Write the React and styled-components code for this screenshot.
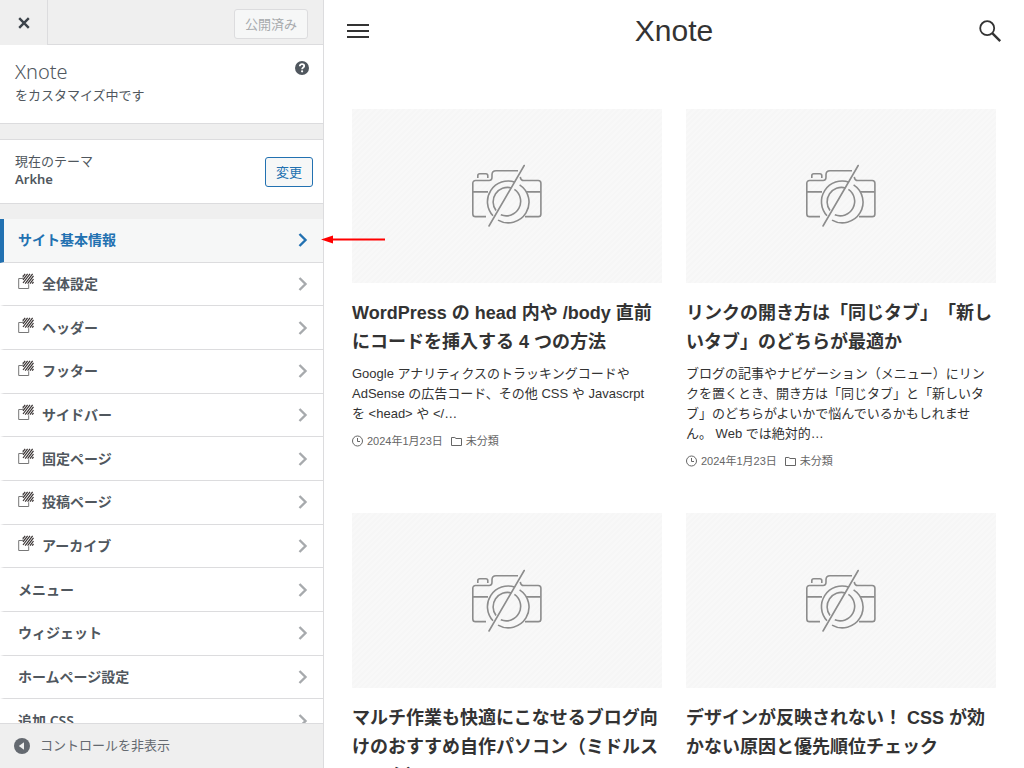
import React from "react";
import styled, { createGlobalStyle } from "styled-components";

const GlobalStyle = createGlobalStyle`
  * {
    box-sizing: border-box;
  }
  body {
    margin: 0;
    background: #fff;
    text-spacing-trim: space-all;
  }
  h1, h2, h3, p, ul {
    margin: 0;
    padding: 0;
    font-weight: normal;
  }
  button {
    font-family: inherit;
    cursor: pointer;
  }
  a {
    color: inherit;
    text-decoration: none;
  }
  svg {
    display: block;
    flex-shrink: 0;
  }
`;

const Layout = styled.div`
  display: flex;
  height: 100vh;
  overflow: hidden;
`;

const Sidebar = styled.aside`
  position: relative;
  display: flex;
  flex-direction: column;
  flex-shrink: 0;
  width: 324px;
  background: #efefef;
  border-right: 1px solid #dcdcde;
  color: #50575e;
  font-family: "Noto Sans", "Noto Sans CJK JP", sans-serif;
  font-size: 13px;
`;
const TopBar = styled.header`
  display: flex;
  flex-shrink: 0;
  height: 45px;
`;
const CloseButton = styled.button`
  display: flex;
  align-items: center;
  justify-content: center;
  width: 48px;
  padding: 0;
  color: #3c434a;
  background: #efefef;
  border: 0;
  border-right: 1px solid #dcdcde;
`;
const TopActions = styled.div`
  display: flex;
  flex: 1;
  align-items: center;
  justify-content: flex-end;
  padding: 4px 15px 0 0;
  border-bottom: 1px solid #dcdcde;
`;
const Button = styled.button`
  height: 30px;
  padding: 0 10px;
  font-size: 13px;
  line-height: 28px;
  color: ${(p) => (p.disabled ? "#a7aaad" : "#2271b1")};
  background: #f6f7f7;
  border: 1px solid ${(p) => (p.disabled ? "#dcdcde" : "#2271b1")};
  border-radius: 3px;
`;
const Panels = styled.div`
  flex: 1;
  min-height: 0;
  overflow: hidden;
`;
const SiteInfo = styled.section`
  display: flex;
  justify-content: space-between;
  height: 79px;
  padding: 13px 13px 0 15px;
  background: #fff;
  border-bottom: 1px solid #dcdcde;
`;
const SiteTitle = styled.h1`
  font-size: 20px;
  font-weight: 300;
  line-height: 27px;
`;
const HelpButton = styled.button`
  align-self: flex-start;
  padding: 1px 0;
  color: #50575e;
  background: none;
  border: 0;
`;
const ThemeInfo = styled.section`
  display: flex;
  align-items: center;
  justify-content: space-between;
  height: 65px;
  margin: 15px 0;
  padding: 0 10px 0 15px;
  background: #fff;
  border-top: 1px solid #dcdcde;
  border-bottom: 1px solid #dcdcde;
`;
const ThemeName = styled.div`
  padding-bottom: 4px;
  line-height: 18px;
`;
const Strong = styled.strong`
  display: block;
  font-weight: 600;
`;
const Menu = styled.ul`
  display: grid;
  grid-auto-rows: 1fr;
  min-height: 524px;
  list-style: none;
`;
const MenuLink = styled.a`
  display: flex;
  align-items: center;
  gap: 8px;
  height: 100%;
  padding: 0 15px 0 14px;
  font-size: 14px;
  font-weight: 600;
  color: ${(p) => (p.$active ? "#2271b1" : "#50575e")};
  background: ${(p) => (p.$active ? "#f6f7f7" : "#fff")};
  border-bottom: 1px solid #dcdcde;
  border-left: 4px solid ${(p) => (p.$active ? "#2271b1" : "#fff")};

  > svg {
    margin-bottom: 2px;
  }
`;
const Label = styled.span`
  flex: 1;
  padding-bottom: 2px;
`;
const Collapse = styled.button`
  display: flex;
  align-items: center;
  flex-shrink: 0;
  gap: 10px;
  height: 45px;
  padding: 0 14px;
  font-size: 13px;
  color: #646970;
  background: #efefef;
  border: 0;
  border-top: 1px solid #dcdcde;
`;
const CollapseLabel = styled.span`
  padding-bottom: 3px;
`;
const Arrow = styled.svg`
  position: absolute;
  top: 234px;
  left: 321px;
  z-index: 1;
`;

const Preview = styled.main`
  flex: 1;
  min-width: 0;
  overflow: hidden;
  color: #333;
  font-family: "Liberation Sans", "Noto Sans CJK JP", sans-serif;
`;
const PreviewHeader = styled.header`
  display: flex;
  align-items: center;
  justify-content: space-between;
  height: 61px;
  margin-bottom: 48px;
  padding: 0 22px;
`;
const IconButton = styled.button`
  padding: 0;
  color: #333;
  background: none;
  border: 0;
`;
const Brand = styled.h2`
  font-size: 30px;
`;
const Posts = styled.div`
  display: grid;
  grid-template-columns: 1fr 1fr;
  gap: 44px 24px;
  padding: 0 28px;
`;
const Thumb = styled.div`
  display: flex;
  align-items: center;
  justify-content: center;
  aspect-ratio: 16 / 9;
  background: repeating-linear-gradient(135deg, #f6f6f6 0 2px, #f8f8f8 2px 4px);
`;
const PostTitle = styled.h3`
  margin: 16px 0 7px;
  font-size: 18px;
  font-weight: bold;
  line-height: 29px;
`;
const Excerpt = styled.p`
  padding-right: 5px;
  font-size: 13px;
  line-height: 20px;
`;
const Meta = styled.div`
  display: flex;
  align-items: center;
  gap: 4px;
  margin-top: 9px;
  font-size: 11px;
  line-height: 16px;
  color: #666;
`;
const Posted = styled.time`
  margin-right: 4px;
`;

const CloseIcon = () => (
  <svg width="12" height="12" viewBox="0 0 12 12" stroke="currentColor" strokeWidth="2.4" aria-hidden="true">
    <path d="M1.2 1.2 10.8 10.8M10.8 1.2 1.2 10.8" />
  </svg>
);

const HelpIcon = () => (
  <svg width="16" height="16" viewBox="0 0 16 16" fill="none" aria-hidden="true">
    <circle cx="8" cy="9" r="7" fill="currentColor" />
    <path d="M5.8 7.2c0-1.4 1-2 2.2-2s2.2.7 2.2 1.9c0 1.5-2.1 1.4-2.1 3.1" stroke="#fff" strokeWidth="1.8" />
    <circle cx="8.1" cy="12.3" r="1.1" fill="#fff" />
  </svg>
);

const ChevronIcon = () => (
  <svg width="10" height="14" viewBox="0 0 10 14" fill="none" stroke="currentColor" strokeWidth="2.4" aria-hidden="true">
    <path d="M1.5 1 7.5 7l-6 6" />
  </svg>
);
const Chevron = styled.span`
  color: ${(p) => (p.$active ? "#2271b1" : "#a7aaad")};
`;

const BlockIcon = () => (
  <svg width="16" height="20" viewBox="0 0 16 20" fill="none" aria-hidden="true">
    <path d="M5 5.5H.7v10h10v-4.3" stroke="#777" />
    <path d="M5 5.5V2.3" stroke="#999" />
    <path
      d="M5 3.6 7.2.8M5 6.8 9.6.8M5 10 12 .8M7.2 10.6 14.6.8M9.6 10.6 15.5 2.9M12 10.6l3.5-4.6M14.2 10.6l1.3-1.6"
      stroke="#3a3434"
      strokeWidth="1.2"
    />
  </svg>
);

const CollapseIcon = () => (
  <svg width="16" height="16" viewBox="0 0 16 16" aria-hidden="true">
    <circle cx="8" cy="8" r="8" fill="currentColor" />
    <path d="M10 4.3v7.4L4.8 8z" fill="#efefef" />
  </svg>
);

const MenuIcon = () => (
  <svg width="24" height="24" viewBox="0 0 24 24" stroke="currentColor" strokeWidth="1.8" aria-hidden="true">
    <path d="M1 6h22M1 12h22M1 18h22" />
  </svg>
);

const SearchIcon = () => (
  <svg width="24" height="24" viewBox="0 0 24 24" fill="none" stroke="currentColor" aria-hidden="true">
    <circle cx="9.2" cy="9.2" r="7" strokeWidth="1.8" />
    <path d="m14.2 14.2 8 8" strokeWidth="2.4" />
  </svg>
);

const CameraIcon = () => (
  <svg width="72" height="64" viewBox="0 0 72 64" fill="none" stroke="#8c8c8c" strokeWidth="1.6" aria-hidden="true">
    <path d="M15 52.6H4.5a2.7 2.7 0 0 1-2.7-2.7V19.2a2.7 2.7 0 0 1 2.7-2.7H18c2.4 0 3-1.3 3-3.5v-2.3c0-2.4 1.6-4 4-4h22" />
    <path d="M49.3 12.8c.3 2.6 1.6 3.7 3.4 3.7h14.5a2.7 2.7 0 0 1 2.7 2.7v30.7a2.7 2.7 0 0 1-2.7 2.7H54" />
    <path d="M6.8 14.1v-2.4a2 2 0 0 1 2-2h6a2 2 0 0 1 2 2v2.4M2 27.9h15M55 27.9h14.5" />
    <path d="M44.1 18.2A20.7 20.7 0 0 0 22 51.8M48.6 20.8A20.7 20.7 0 0 1 27 56.1" />
    <path d="M40.3 23.9A14.5 14.5 0 0 0 25 46.6M43.4 25.4A14.5 14.5 0 0 1 29.8 50.8" />
    <path d="M53.2 1.5 18 62" strokeLinecap="round" />
  </svg>
);

const ClockIcon = () => (
  <svg width="11" height="12" viewBox="0 0 11 12" fill="none" stroke="currentColor" aria-hidden="true">
    <circle cx="5.5" cy="6" r="5" />
    <path d="M5.5 3v3.5H8" />
  </svg>
);

const FolderIcon = () => (
  <svg width="11" height="12" viewBox="0 0 11 12" fill="none" stroke="currentColor" strokeLinejoin="round" aria-hidden="true">
    <path d="M.5 10.5v-8h3.3L5 3.5h5.5v7z" />
  </svg>
);

const MENU = [
  { title: "サイト基本情報", active: true },
  { title: "全体設定", icon: true },
  { title: "ヘッダー", icon: true },
  { title: "フッター", icon: true },
  { title: "サイドバー", icon: true },
  { title: "固定ページ", icon: true },
  { title: "投稿ページ", icon: true },
  { title: "アーカイブ", icon: true },
  { title: "メニュー" },
  { title: "ウィジェット" },
  { title: "ホームページ設定" },
  { title: "追加 CSS" },
];

const POSTS = [
  {
    title: "WordPress の head 内や /body 直前にコードを挿入する 4 つの方法",
    excerpt:
      "Google アナリティクスのトラッキングコードや AdSense の広告コード、その他 CSS や Javascrpt を <head> や </…",
  },
  {
    title: "リンクの開き方は「同じタブ」「新しいタブ」のどちらが最適か",
    excerpt:
      "ブログの記事やナビゲーション（メニュー）にリンクを置くとき、開き方は「同じタブ」と「新しいタブ」のどちらがよいかで悩んでいるかもしれません。 Web では絶対的…",
  },
  { title: "マルチ作業も快適にこなせるブログ向けのおすすめ自作パソコン（ミドルスペック）" },
  { title: "デザインが反映されない！ CSS が効かない原因と優先順位チェック" },
];

const Post = ({ title, excerpt }) => (
  <article>
    <Thumb>
      <CameraIcon />
    </Thumb>
    <PostTitle>{title}</PostTitle>
    {excerpt && (
      <>
        <Excerpt>{excerpt}</Excerpt>
        <Meta>
          <ClockIcon />
          <Posted dateTime="2024-01-23">2024年1月23日</Posted>
          <FolderIcon />
          <span>未分類</span>
        </Meta>
      </>
    )}
  </article>
);

const App = () => {
  return (
    <Layout>
      <GlobalStyle />
      <Sidebar>
        <TopBar>
          <CloseButton aria-label="閉じる">
            <CloseIcon />
          </CloseButton>
          <TopActions>
            <Button disabled>公開済み</Button>
          </TopActions>
        </TopBar>
        <Panels>
          <SiteInfo>
            <div>
              <SiteTitle>Xnote</SiteTitle>
              <p>をカスタマイズ中です</p>
            </div>
            <HelpButton aria-label="ヘルプ">
              <HelpIcon />
            </HelpButton>
          </SiteInfo>
          <ThemeInfo>
            <ThemeName>
              現在のテーマ
              <Strong>Arkhe</Strong>
            </ThemeName>
            <Button>変更</Button>
          </ThemeInfo>
          <Menu>
            {MENU.map((m) => (
              <li key={m.title}>
                <MenuLink href="#" $active={m.active}>
                  {m.icon && <BlockIcon />}
                  <Label>{m.title}</Label>
                  <Chevron $active={m.active}>
                    <ChevronIcon />
                  </Chevron>
                </MenuLink>
              </li>
            ))}
          </Menu>
        </Panels>
        <Collapse>
          <CollapseIcon />
          <CollapseLabel>コントロールを非表示</CollapseLabel>
        </Collapse>
        <Arrow width="65" height="12" viewBox="0 0 65 12" aria-hidden="true">
          <path d="M10 5.5h54" stroke="#f00" strokeWidth="2" />
          <path d="M0 5.5 12 1.5v8z" fill="#f00" />
        </Arrow>
      </Sidebar>
      <Preview>
        <PreviewHeader>
          <IconButton aria-label="メニュー">
            <MenuIcon />
          </IconButton>
          <Brand>Xnote</Brand>
          <IconButton aria-label="検索">
            <SearchIcon />
          </IconButton>
        </PreviewHeader>
        <Posts>
          {POSTS.map((p) => (
            <Post key={p.title} title={p.title} excerpt={p.excerpt} />
          ))}
        </Posts>
      </Preview>
    </Layout>
  );
};

export default App;
